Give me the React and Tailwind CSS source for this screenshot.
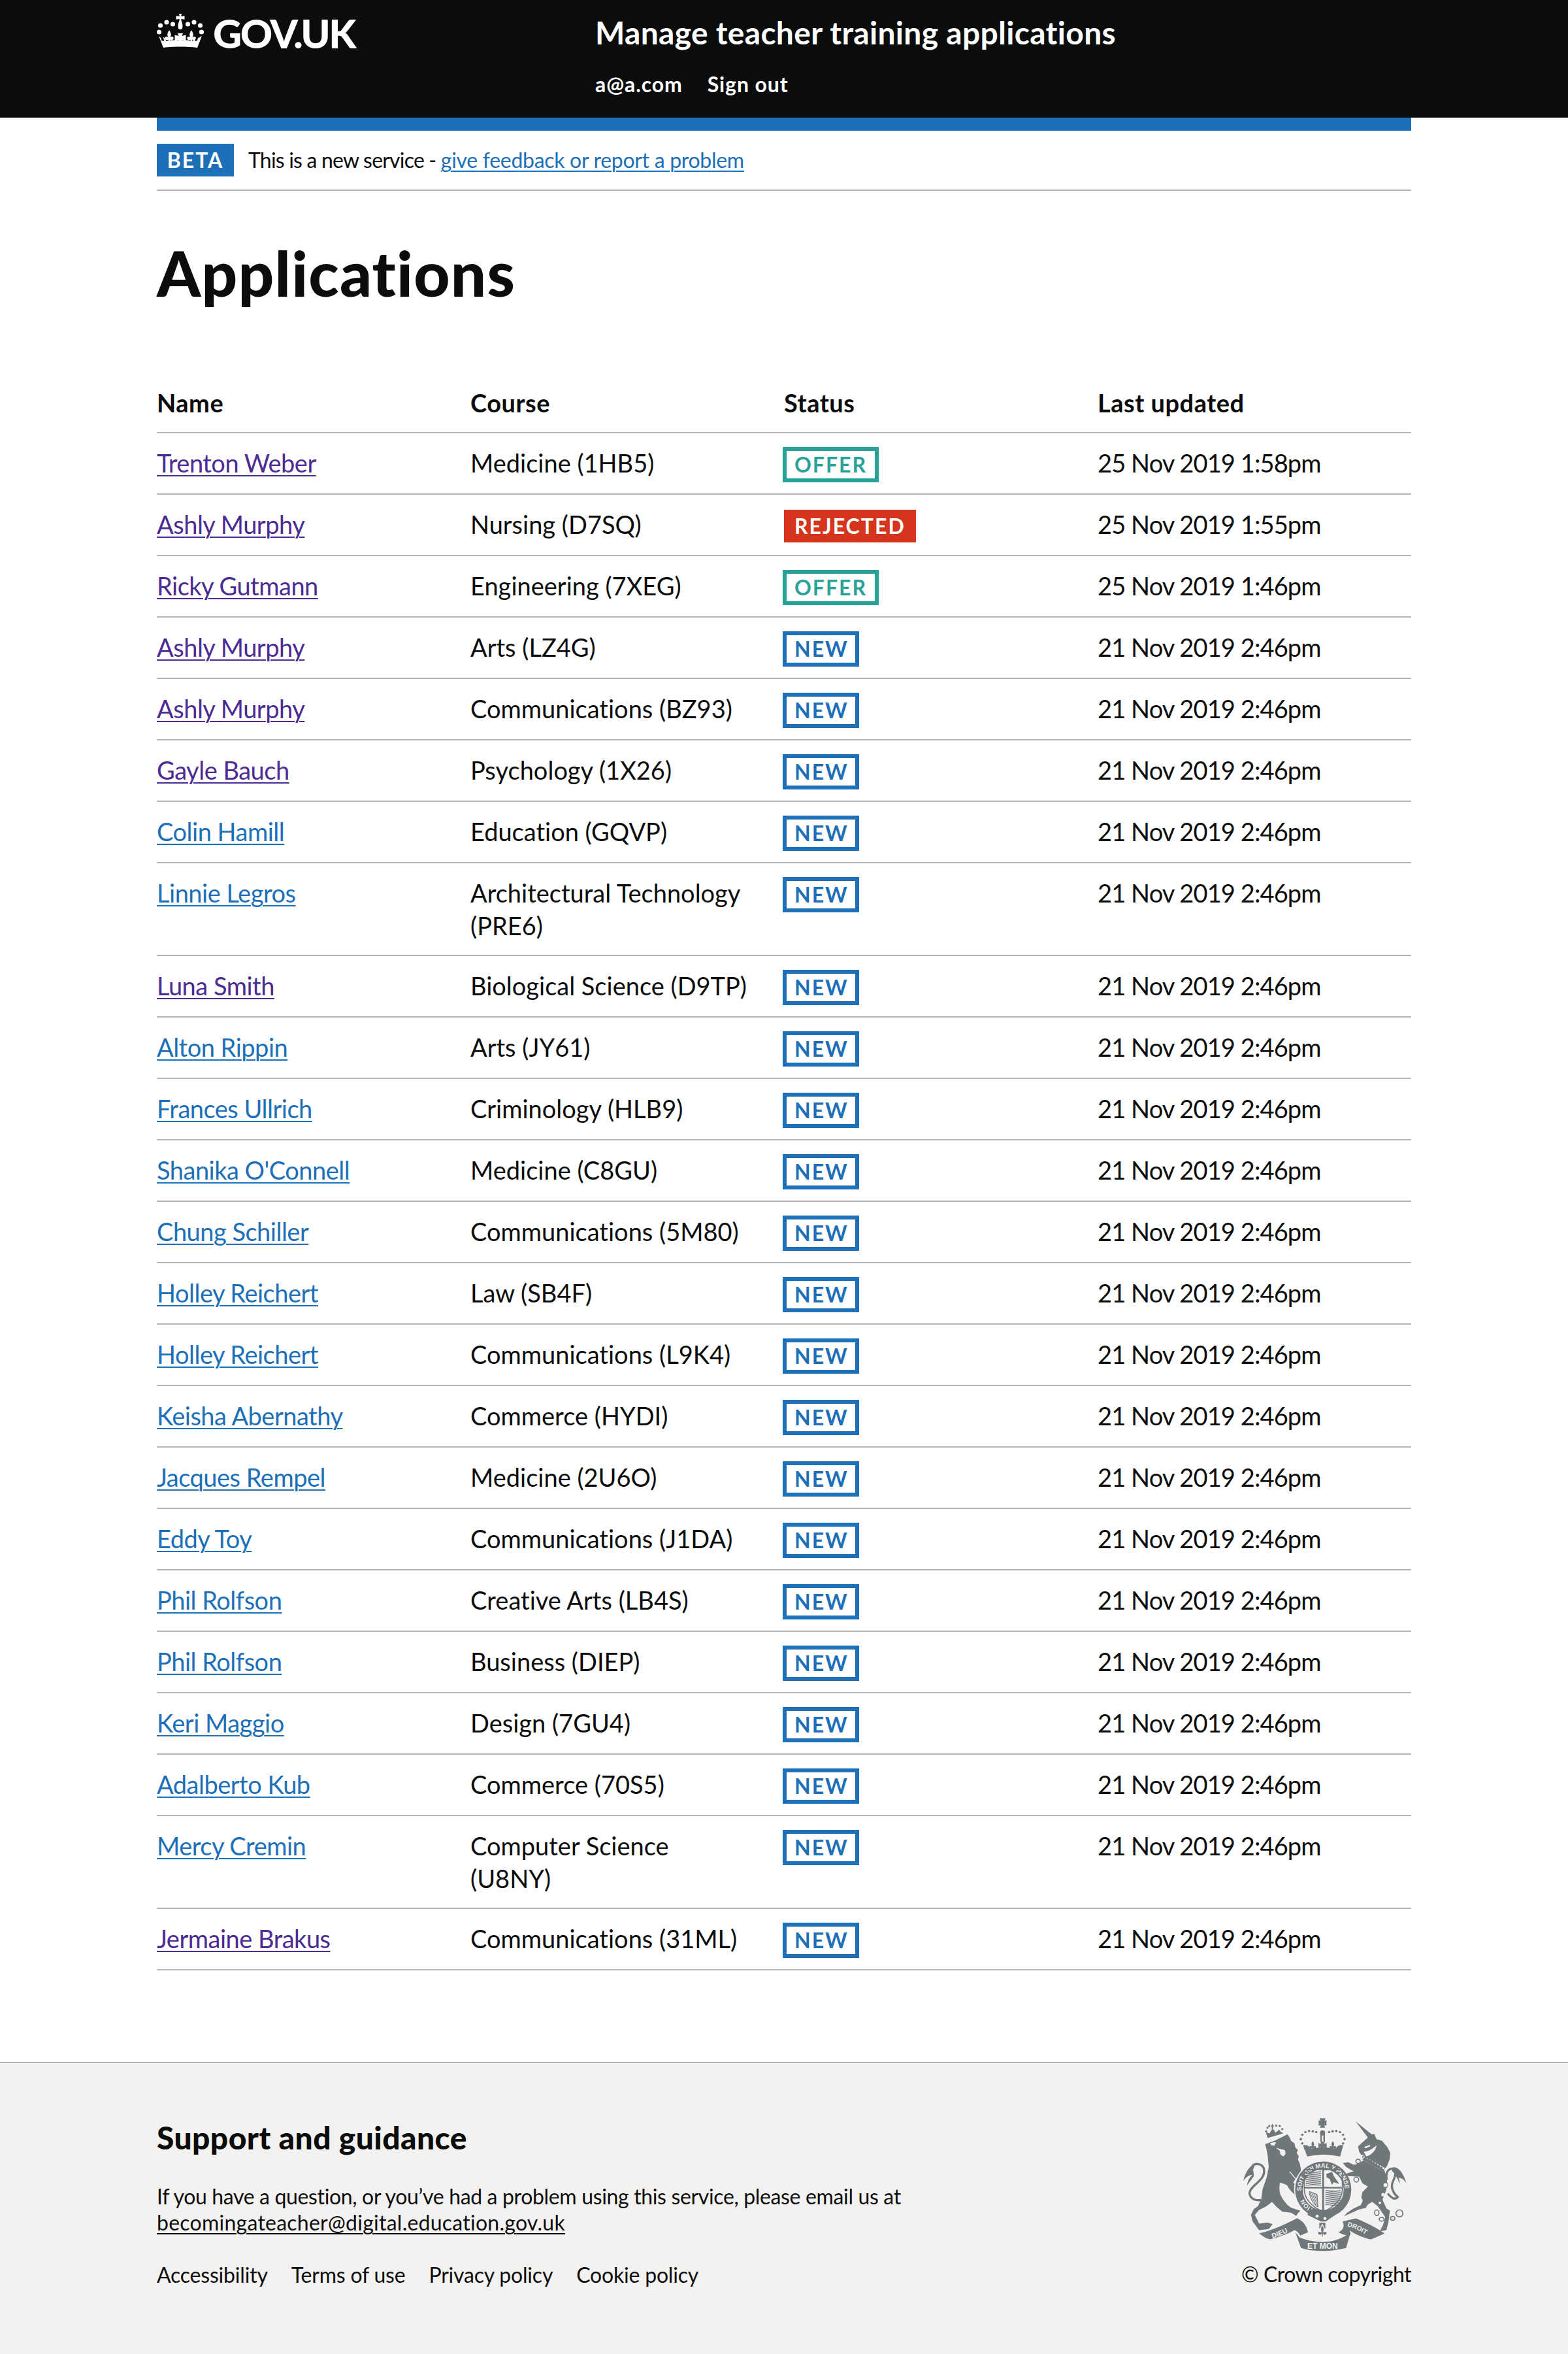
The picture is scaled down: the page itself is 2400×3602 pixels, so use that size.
const rows = [
  { name: "Trenton Weber", course: "Medicine (1HB5)", status: "OFFER", updated: "25 Nov 2019 1:58pm", visited: true },
  { name: "Ashly Murphy", course: "Nursing (D7SQ)", status: "REJECTED", updated: "25 Nov 2019 1:55pm", visited: true },
  { name: "Ricky Gutmann", course: "Engineering (7XEG)", status: "OFFER", updated: "25 Nov 2019 1:46pm", visited: true },
  { name: "Ashly Murphy", course: "Arts (LZ4G)", visited: true },
  { name: "Ashly Murphy", course: "Communications (BZ93)", visited: true },
  { name: "Gayle Bauch", course: "Psychology (1X26)", visited: true },
  { name: "Colin Hamill", course: "Education (GQVP)" },
  { name: "Linnie Legros", course: "Architectural Technology (PRE6)" },
  { name: "Luna Smith", course: "Biological Science (D9TP)", visited: true },
  { name: "Alton Rippin", course: "Arts (JY61)" },
  { name: "Frances Ullrich", course: "Criminology (HLB9)" },
  { name: "Shanika O'Connell", course: "Medicine (C8GU)" },
  { name: "Chung Schiller", course: "Communications (5M80)" },
  { name: "Holley Reichert", course: "Law (SB4F)" },
  { name: "Holley Reichert", course: "Communications (L9K4)" },
  { name: "Keisha Abernathy", course: "Commerce (HYDI)" },
  { name: "Jacques Rempel", course: "Medicine (2U6O)" },
  { name: "Eddy Toy", course: "Communications (J1DA)" },
  { name: "Phil Rolfson", course: "Creative Arts (LB4S)" },
  { name: "Phil Rolfson", course: "Business (DIEP)" },
  { name: "Keri Maggio", course: "Design (7GU4)" },
  { name: "Adalberto Kub", course: "Commerce (70S5)" },
  { name: "Mercy Cremin", course: "Computer Science (U8NY)" },
  { name: "Jermaine Brakus", course: "Communications (31ML)", visited: true },
];

function Tag({ status }) {
  if (status === "REJECTED") {
    return (
      <span className="mt-0.5 inline-flex h-[50px] items-center bg-[#d4351c] px-4 text-[32px] font-bold tracking-[2px] text-white">
        REJECTED
      </span>
    );
  }
  if (status === "OFFER") {
    return (
      <span className="-ml-0.5 inline-flex h-[54px] items-center border-[6px] border-[#28a197] px-[12px] text-[32px] font-bold tracking-[2px] text-[#28a197]">
        OFFER
      </span>
    );
  }
  return (
    <span className="-ml-0.5 inline-flex h-[54px] items-center border-[6px] border-[#1d70b8] pr-[10px] pl-[12px] text-[32px] font-bold tracking-[2px] text-[#1d70b8]">
      NEW
    </span>
  );
}

const fleur = "M0-28C7-18 9-10 3-2 8-6 14-6 16 0 16 8 8 10 3 6L3 14-3 14-3 6C-8 10-16 8-16 0-14-6-8-6-3-2-9-10-7-18 0-28Z";

function CrownLogo() {
  return (
    <svg viewBox="10 10 72 54" className="h-[54px] w-[72px] fill-white">
      <circle cx="15.5" cy="29" r="3.6" />
      <circle cx="25" cy="24" r="3.6" />
      <circle cx="34.5" cy="27" r="3.6" />
      <circle cx="13.5" cy="39" r="3.6" />
      <circle cx="57.5" cy="27" r="3.6" />
      <circle cx="67" cy="24" r="3.6" />
      <circle cx="76.5" cy="29" r="3.6" />
      <circle cx="78.5" cy="39" r="3.6" />
      <path d="M44 11h4l-.8 4 5.300-.8v5.600l-5.300-.8.6 3.600c1.600 3 2.200 8 1.200 11-.6 1.800-5.400 1.800-6 0-1-3-.4-8 1.200-11l.6-3.600-5.300.8v-5.600l5.300.8z" />
      <path d="M13 45l3.800 3.800.4 3.200 3.800 1c0-2.500-.4-4.500-1.500-6.500 2.500 1 4 3.200 4.700 6.500l8-1.400 2-.2 21 0 2 .2 8 1.400c.7-3.300 2.200-5.500 4.700-6.500-1.100 2-1.500 4-1.500 6.500l3.800-1 .4-3.200L79 45l-7 18c-16-2-36-2-52 0z" />
      <path d="M42 41h8l-1.500 4 6-1.500v9l-6-1.500 1.500 4h-8l1.500-4-6 1.500v-9l6 1.500z" />
      <path d={fleur} transform="translate(29 48) scale(.42)" />
      <path d={fleur} transform="translate(63 48) scale(.42)" />
    </svg>
  );
}

const ink = "#6f777b";
const paper = "#f3f2f1";

function RoyalCrest() {
  return (
    <svg viewBox="130 110 756 620" className="h-[207px] w-[252px]" fill={ink}>
      <defs>
        <path id="garter-main" d="M400 450A100 100 0 1 1 568 516" />
        <path id="garter-hon" d="M452 532A100 100 0 0 1 404 470" />
        <path id="dieu" d="M268 668C305 655 340 640 372 620" />
        <path id="droit" d="M610 612C650 622 690 645 728 672" />
        <pattern id="stripes" width="9" height="9" patternUnits="userSpaceOnUse" patternTransform="rotate(-8)">
          <rect width="9" height="5" fill={ink} />
        </pattern>
        <pattern id="harp" width="7" height="7" patternUnits="userSpaceOnUse" patternTransform="rotate(-25)">
          <rect width="3.500" height="7" fill={ink} />
        </pattern>
      </defs>

      {/* lion's crown */}
      <path d="M245 207L236 180 254 186 262 170 268 166 274 170 281 182 298 168 306 180 313 182 316 186z" />
      <circle cx="238" cy="176" r="5" />
      <circle cx="244" cy="160" r="5" />
      <circle cx="252" cy="152" r="5" />
      <circle cx="284" cy="150" r="5" />
      <circle cx="300" cy="152" r="5" />
      <circle cx="312" cy="166" r="5" />
      <path d="M260 150h4v-7h5v7h4v5h-4v12h-5v-12h-4z" />

      {/* lion */}
      <path d="M233 235C260 228 300 210 335 190 344 200 350 210 352 220L368 232 372 250 384 262 378 275 388 292 384 305 394 330 398 358 375 392 362 412C375 422 388 430 396 445L402 468 385 470 368 465C355 455 342 440 335 425L322 418 302 412C297 432 298 450 304 468 316 492 332 515 355 528L395 541 384 552 376 565 352 550 312 545 282 520 265 500 240 520 205 538 186 560 206 600 245 595 268 602 250 625 205 630 176 590 168 560 180 535 200 520 215 490 222 440 240 390 250 340 245 290 240 260z" />
      <path d="M256 232C264 228 274 226 284 226L276 242 260 240z" fill={paper} />
      <path d="M284 252L306 258 322 262C330 272 328 288 316 290 304 288 300 276 302 268z" fill={paper} />
      <path d="M346 362L386 408" stroke={paper} strokeWidth="4" />

      {/* lion's tail */}
      <path d="M215 492C170 498 150 465 170 440 195 410 235 390 228 350 222 325 190 320 175 335" fill="none" stroke={ink} strokeWidth="10" />
      <path d="M190 322C165 332 142 362 133 405 145 385 160 378 175 375 160 390 153 405 150 425L182 382 178 352z" />

      {/* royal crown */}
      <path d="M414 262L408 240C420 238 430 240 437 248L446 256 500 248 554 256 563 248C570 240 580 238 592 240L586 262z" />
      <path d="M416 262Q500 245 586 262L578 292Q500 275 426 292z" />
      <path d={fleur} transform="translate(452 248) scale(.95)" />
      <path d={fleur} transform="translate(544 248) scale(.95)" />
      <path d="M488 224h18l-3 9 13-3v22l-13-3 3 9h-18l3-9-13 3v-22l13 3z" />
      <rect x="487" y="190" width="7" height="36" />
      <rect x="501" y="190" width="7" height="36" />
      <circle cx="497" cy="184" r="12" />
      <path d="M483 116h28l-5 12 9-3v26l-10-3 4 12h-24l4-12-10 3v-26l9 3z" />
      <circle cx="419" cy="250" r="5.500" />
      <circle cx="404" cy="232" r="5.500" />
      <circle cx="397" cy="212" r="5.500" />
      <circle cx="404" cy="192" r="5.500" />
      <circle cx="418" cy="180" r="5.500" />
      <circle cx="435" cy="175" r="5.500" />
      <circle cx="452" cy="176" r="5.500" />
      <circle cx="468" cy="180" r="5.500" />
      <circle cx="576" cy="250" r="5.500" />
      <circle cx="591" cy="232" r="5.500" />
      <circle cx="598" cy="212" r="5.500" />
      <circle cx="591" cy="192" r="5.500" />
      <circle cx="577" cy="180" r="5.500" />
      <circle cx="560" cy="175" r="5.500" />
      <circle cx="543" cy="176" r="5.500" />
      <circle cx="527" cy="180" r="5.500" />

      {/* garter and shield */}
      <circle cx="500" cy="444" r="134" fill={paper} />
      <circle cx="500" cy="444" r="129" />
      <circle cx="500" cy="444" r="94" fill={paper} />
      <text fontFamily="Liberation Sans" fontWeight="700" fontSize="28" fill={paper}>
        <textPath href="#garter-main">SOIT QUI MAL Y PENSE</textPath>
      </text>
      <text fontFamily="Liberation Sans" fontWeight="700" fontSize="28" fill={paper}>
        <textPath href="#garter-hon">HON</textPath>
      </text>
      <path d="M413 352H588V440C588 490 545 525 500 546 455 525 413 490 413 440z" fill="none" stroke={ink} strokeWidth="5" />
      <path d="M495 350h9v196h-9zM413 431h175v8h-175z" />
      <rect x="420" y="360" width="70" height="66" fill="url(#stripes)" />
      <rect x="510" y="446" width="70" height="72" fill="url(#stripes)" />
      <path d="M514 372l26-10 10 22 24 34-26-8-8 12-10-26-14-8z" />
      <path d="M436 452l36 14 4 58c-24-14-38-42-40-72z" fill="url(#harp)" stroke={ink} strokeWidth="3" />

      {/* garter buckle */}
      <path d="M436 528L460 540 470 556 510 562 560 540 572 548 512 590H490L428 560z" />
      <circle cx="472" cy="566" r="7" fill={paper} />
      <circle cx="508" cy="576" r="7" fill={paper} />

      {/* unicorn */}
      <path d="M648 130L722 190 734 188 745 212 770 220 795 250 808 275 805 305 793 335 780 352 790 385 795 420 788 450 772 490 790 530 806 540 800 590 790 630 760 635 775 605 785 570 750 520 725 500 705 512 695 528 665 535 635 548 595 566 610 550 640 530 672 515 682 495 675 480 680 455 705 430 680 415 665 385 615 382 600 372 640 360 625 352 605 340 590 322 615 318 640 330 660 325 685 310 678 292 690 285 675 285 665 270 660 245 705 205z" />
      <path d="M686 270C710 268 728 256 745 240 742 262 725 284 698 292z" fill={paper} />
      <path d="M688 248L716 238 714 246 694 254z" fill={paper} />
      <path d="M686 290L782 344 778 362 680 306z" fill={paper} />
      <path d="M680 306L778 362 781 352 772 348 770 336 762 342 758 328 750 334 746 320 738 326 734 312 726 318 722 304 714 310 710 298 702 304 698 292 690 296z" />
      <circle cx="660" cy="314" r="10" fill={paper} stroke={ink} strokeWidth="5" />
      <circle cx="652" cy="398" r="11" fill={paper} stroke={ink} strokeWidth="5" />
      <circle cx="775" cy="467" r="8" fill={paper} />
      <circle cx="786" cy="423" r="11" fill={paper} stroke={ink} strokeWidth="4" />
      <circle cx="760" cy="505" r="6" fill={paper} />
      <ellipse cx="746" cy="550" rx="10" ry="13" fill="none" stroke={ink} strokeWidth="5" />
      <ellipse cx="768" cy="580" rx="11" ry="9" fill="none" stroke={ink} strokeWidth="5" />
      <ellipse cx="819" cy="576" rx="10" ry="9" fill="none" stroke={ink} strokeWidth="5" />
      <circle cx="850" cy="553" r="16" fill="none" stroke={ink} strokeWidth="5" />

      {/* unicorn's tail */}
      <path d="M792 400C784 365 800 345 822 348 842 352 830 385 818 412 810 435 822 462 842 478 828 495 812 480 796 462" fill="none" stroke={ink} strokeWidth="10" />
      <path d="M820 342C846 338 866 366 882 414 868 394 856 390 846 390 850 400 852 408 850 416 842 392 830 372 816 358z" />

      {/* motto ribbon */}
      <path d="M205 645C270 630 330 600 380 575 405 585 425 610 430 640L395 655C385 640 378 632 368 630 330 650 290 665 255 672 235 668 220 655 205 645z" />
      <path d="M372 640L392 664C430 680 470 684 500 684 535 684 575 672 602 656L626 640 605 712C540 730 450 730 398 712z" />
      <path d="M590 590C610 585 635 580 650 576 700 596 745 620 782 645 760 655 740 665 720 672 690 668 650 650 622 632L625 650C610 660 590 650 570 640 590 630 600 615 590 590z" />
      <path d="M482 596h28v26h-28z" />
      <path d={fleur} transform="translate(496 642) scale(1.35)" stroke={paper} strokeWidth="3" />
      <text fontFamily="Liberation Sans" fontWeight="700" fontSize="32" fill={paper}>
        <textPath href="#dieu">DIEU</textPath>
      </text>
      <text fontFamily="Liberation Sans" fontWeight="700" fontSize="30" fill={paper}>
        <textPath href="#droit">DROIT</textPath>
      </text>
      <text x="497" y="716" textAnchor="middle" fontFamily="Liberation Sans" fontWeight="700" fontSize="36" fill={paper}>ET MON</text>
    </svg>
  );
}

export default function App() {
  return (
    <div className="flex min-h-[3602px] flex-col bg-white font-['Lato',sans-serif] text-[#0b0c0c] [font-variant-ligatures:none]">
      <header className="h-[180px] bg-[#0b0c0c] text-white">
        <div className="mx-auto flex w-[1920px]">
          <div className="flex w-[671px] items-start gap-[14px] pt-[20px]">
            <CrownLogo />
            <span className="mt-[-3px] text-[61px] leading-[68px] font-black tracking-[-2.5px]">GOV.UK</span>
          </div>
          <div>
            <div className="pt-[20px] text-[48px] leading-[60px] font-bold tracking-[0.3px]">Manage teacher training applications</div>
            <div className="mt-[29px] flex gap-[38px] text-[32px] leading-[40px] font-bold tracking-[0.9px]">
              <span>a@a.com</span>
              <span>Sign out</span>
            </div>
          </div>
        </div>
      </header>

      <main className="mx-auto w-[1920px]">
        <div className="h-5 bg-[#1d70b8]" />
        <div className="flex items-center gap-[22px] border-b-2 border-[#b1b4b6] pt-5 pb-5">
          <span className="flex h-[50px] w-[118px] items-center justify-center bg-[#1d70b8] text-[32px] font-bold tracking-[2px] text-white">BETA</span>
          <p className="text-[32px] leading-[50px] tracking-[-0.3px]">
            <span className="tracking-[-0.8px]">This is a new service - </span>
            <a className="text-[#1d70b8] underline decoration-2 underline-offset-4" href="#feedback">give feedback or report a problem</a>
          </p>
        </div>

        <h1 className="mt-[75px] text-[96px] leading-[100px] font-black tracking-[1.2px]">Applications</h1>

        <table className="mt-[104px] w-full table-fixed border-collapse text-[38px] leading-[50px]">
          <thead>
            <tr className="border-b-2 border-[#b1b4b6] text-left tracking-[0.5px]">
              <th className="py-5 font-bold">Name</th>
              <th className="py-5 font-bold">Course</th>
              <th className="py-5 font-bold">Status</th>
              <th className="py-5 font-bold">Last updated</th>
            </tr>
          </thead>
          <tbody>
            {rows.map((row, i) => (
              <tr key={i} className="border-b-2 border-[#b1b4b6] align-top">
                <td className="h-[94px] pt-5 pb-0 tracking-[-0.5px]">
                  <a href="#application" className={`underline decoration-2 underline-offset-4 ${row.visited ? "text-[#4c2c92]" : "text-[#1d70b8]"}`}>{row.name}</a>
                </td>
                <td className="py-5 pr-[44px]">{row.course}</td>
                <td className="pt-5 pb-0"><Tag status={row.status} /></td>
                <td className="pt-5 pb-0 tracking-[-0.9px]">{row.updated ?? "21 Nov 2019 2:46pm"}</td>
              </tr>
            ))}
          </tbody>
        </table>
      </main>

      <footer className="mt-[140px] flex-1 border-t-2 border-[#b1b4b6] bg-[#f3f2f1] pb-[60px]">
        <div className="mx-auto flex w-[1920px] justify-between pt-[80px]">
          <div>
            <h2 className="mt-[4px] text-[48px] leading-[60px] font-black tracking-[0.4px]">Support and guidance</h2>
            <p className="mt-[40px] w-[1200px] text-[32px] leading-[40px] tracking-[-0.35px]">
              If you have a question, or you’ve had a problem using this service, please email us at<br />
              <a className="tracking-[0.25px] underline decoration-2 underline-offset-4" href="mailto:becomingateacher@digital.education.gov.uk">becomingateacher@digital.education.gov.uk</a>
            </p>
            <div className="mt-[40px] flex gap-[36px] text-[32px] leading-[40px] tracking-[-0.2px]">
              <span>Accessibility</span>
              <span>Terms of use</span>
              <span>Privacy policy</span>
              <span>Cookie policy</span>
            </div>
          </div>
          <div className="flex flex-col items-end">
            <div className="mt-[2px] mr-[6px]"><RoyalCrest /></div>
            <span className="mt-[14px] text-[32px] leading-[40px] tracking-[-0.5px]">© Crown copyright</span>
          </div>
        </div>
      </footer>
    </div>
  );
}
